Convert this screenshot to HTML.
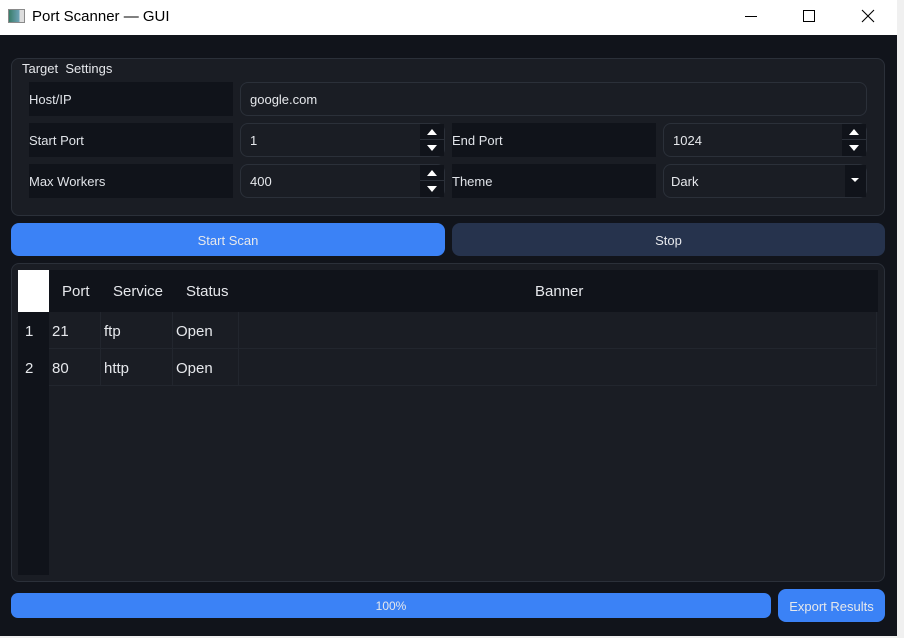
<!DOCTYPE html>
<html><head><meta charset="utf-8"><style>
*{box-sizing:border-box;margin:0;padding:0}
body{width:904px;height:638px;overflow:hidden;background:#f0f0f0;font-family:"Liberation Sans",sans-serif;position:relative;font-size:13px;color:#e6e8ec}
.a{position:absolute}
.win{left:0;top:0;width:897px;height:636px;background:#11141b}
.title{left:0;top:0;width:897px;height:35px;background:#fff;color:#000}
.lbl{background:#10131a;color:#e0e3e8;padding-top:2px;height:34px;line-height:32px;font-size:13px}
.inp{background:#1a1d24;border:1px solid #2b3039;border-radius:8px;padding-left:9px;padding-top:2px;line-height:30px;font-size:13px}
.spin{width:24px;background:#10131a}
.tri{width:0;height:0;border-left:5px solid transparent;border-right:5px solid transparent;position:absolute;left:7px}
.cell{line-height:35px;padding-top:2px;font-size:15px;border-right:1px solid #22262e;border-bottom:1px solid #22262e}
.h{font-size:15px}
.btn{text-align:center;line-height:31px;padding-top:2px}
</style></head><body>
<div class="a win"></div>
<div class="a title">
 <div class="a" style="left:8px;top:9px;width:17px;height:14px;border:1px solid #8a8a8a;background:linear-gradient(90deg,#3a7d6a,#6fa3b8 70%,#ddd 70%)"></div>
 <div class="a" style="left:32px;top:8px;font-size:15px">Port Scanner — GUI</div>
 <div class="a" style="left:745px;top:16px;width:12px;height:1px;background:#000"></div>
 <div class="a" style="left:803px;top:10px;width:12px;height:12px;border:1px solid #000"></div>
 <svg class="a" style="left:861px;top:9px" width="14" height="14"><path d="M1 1L13 13M13 1L1 13" stroke="#000" stroke-width="1.1"/></svg>
</div>
<div class="a" style="left:11px;top:58px;width:874px;height:158px;background:#1a1d24;border:1px solid #2b3039;border-radius:8px"></div>
<div class="a" style="left:22px;top:61px;font-size:13px">Target&nbsp; Settings</div>
<div class="a lbl" style="left:29px;top:82px;width:204px">Host/IP</div>
<div class="a inp" style="left:240px;top:82px;width:627px;height:34px">google.com</div>
<div class="a lbl" style="left:29px;top:123px;width:204px">Start Port</div>
<div class="a inp" style="left:240px;top:123px;width:205px;height:34px">1</div>
<div class="a spin" style="left:420px;top:124px;height:32px"><div class="tri" style="top:5px;border-bottom:6px solid #fff"></div><div class="a" style="left:0;top:15px;width:24px;height:1px;background:#2b3039"></div><div class="tri" style="top:21px;border-top:6px solid #fff"></div></div>
<div class="a lbl" style="left:452px;top:123px;width:204px">End Port</div>
<div class="a inp" style="left:663px;top:123px;width:204px;height:34px">1024</div>
<div class="a spin" style="left:842px;top:124px;height:32px"><div class="tri" style="top:5px;border-bottom:6px solid #fff"></div><div class="a" style="left:0;top:15px;width:24px;height:1px;background:#2b3039"></div><div class="tri" style="top:21px;border-top:6px solid #fff"></div></div>
<div class="a lbl" style="left:29px;top:164px;width:204px">Max Workers</div>
<div class="a inp" style="left:240px;top:164px;width:205px;height:34px">400</div>
<div class="a spin" style="left:420px;top:165px;height:32px"><div class="tri" style="top:5px;border-bottom:6px solid #fff"></div><div class="a" style="left:0;top:15px;width:24px;height:1px;background:#2b3039"></div><div class="tri" style="top:21px;border-top:6px solid #fff"></div></div>
<div class="a lbl" style="left:452px;top:164px;width:204px">Theme</div>
<div class="a inp" style="left:663px;top:164px;width:204px;height:34px;padding-left:7px">Dark</div>
<div class="a spin" style="left:845px;top:165px;height:32px;width:21px"><div class="tri" style="top:13px;left:6px;border-left-width:4px;border-right-width:4px;border-top:4px solid #fff"></div></div>
<div class="a btn" style="left:11px;top:223px;width:434px;height:33px;background:#3b82f6;border-radius:8px">Start Scan</div>
<div class="a btn" style="left:452px;top:223px;width:433px;height:33px;background:#26334d;border-radius:8px">Stop</div>
<div class="a" style="left:11px;top:263px;width:874px;height:319px;background:#1a1d24;border:1px solid #2b3039;border-radius:8px"></div>
<div class="a" style="left:18px;top:270px;width:860px;height:42px;background:#10131a"></div>
<div class="a" style="left:18px;top:270px;width:31px;height:42px;background:#fff"></div>
<div class="a" style="left:18px;top:312px;width:31px;height:263px;background:#10131a"></div>
<div class="a h" style="left:62px;top:283px">Port</div>
<div class="a h" style="left:113px;top:283px">Service</div>
<div class="a h" style="left:186px;top:283px">Status</div>
<div class="a h" style="left:535px;top:283px">Banner</div>
<div class="a h" style="left:25px;top:313px;line-height:37px">1</div>
<div class="a h" style="left:25px;top:350px;line-height:37px">2</div>
<div class="a cell" style="left:49px;top:312px;width:52px;height:37px;padding-left:3px">21</div>
<div class="a cell" style="left:101px;top:312px;width:72px;height:37px;padding-left:3px">ftp</div>
<div class="a cell" style="left:173px;top:312px;width:66px;height:37px;padding-left:3px">Open</div>
<div class="a cell" style="left:239px;top:312px;width:638px;height:37px"></div>
<div class="a cell" style="left:49px;top:349px;width:52px;height:37px;padding-left:3px">80</div>
<div class="a cell" style="left:101px;top:349px;width:72px;height:37px;padding-left:3px">http</div>
<div class="a cell" style="left:173px;top:349px;width:66px;height:37px;padding-left:3px">Open</div>
<div class="a cell" style="left:239px;top:349px;width:638px;height:37px"></div>
<div class="a" style="left:11px;top:593px;width:760px;height:25px;background:#3b82f6;border-radius:7px;text-align:center;line-height:23px;font-size:12px;padding-top:2px">100%</div>
<div class="a btn" style="left:778px;top:589px;width:107px;height:33px;background:#3b82f6;border-radius:8px">Export Results</div>
</body></html>
